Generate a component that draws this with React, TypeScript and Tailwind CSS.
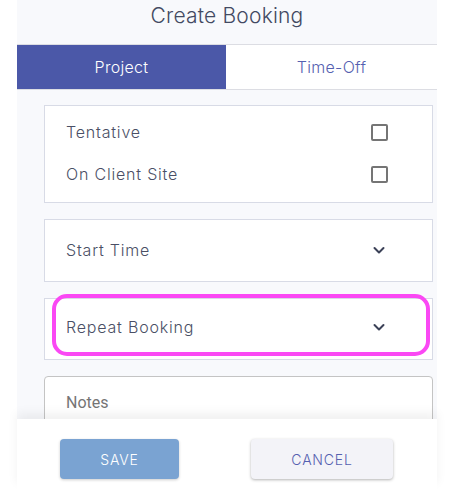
import React from "react";

function Chevron() {
  return (
    <svg width="14" height="14" viewBox="0 0 14 14" fill="none" stroke="#3b4157" strokeWidth="2" strokeLinecap="round" strokeLinejoin="round">
      <path d="M2.5 5L7 9.5L11.5 5" />
    </svg>
  );
}

function Box() {
  return <div className="w-[17px] h-[17px] border-2 border-[#757575] rounded-[2px] bg-white" />;
}

export default function App() {
  const font = { fontFamily: "Inter, 'Noto Sans', sans-serif" };
  return (
    <div className="w-[450px] h-[489px] bg-white flex overflow-hidden font-light" style={font}>
      <div className="w-[17px] shrink-0 bg-white" />
      <div className="w-[420px] shrink-0 h-full flex flex-col bg-[#f8f9fc] relative">
        <div className="h-[45px] shrink-0 flex items-start justify-center pt-[3px] border-b border-[#dcdde3]">
          <span className="text-[21px] text-[#434a62] leading-[26px] tracking-[0.2px]">Create Booking</span>
        </div>
        <div className="flex h-[45px] shrink-0 border-b border-[#dcdde3] tracking-[0.3px]">
          <div className="w-[209px] bg-[#4b58a8] text-white flex items-center justify-center text-[16px]">Project</div>
          <div className="flex-1 bg-white text-[#5560b0] flex items-center justify-center text-[16px]">Time-Off</div>
        </div>
        <div className="flex-1 overflow-hidden pl-[27px] pr-[4px] pt-[15px] flex flex-col gap-[16px] tracking-[0.8px]">
          <div className="bg-white border border-[#d8dbe6] h-[98px] shrink-0 flex flex-col justify-center gap-[17px] pl-[21px] pr-[44px] pb-[2px] text-[#4a4f65] text-[16px]">
            <div className="flex items-center justify-between h-[25px]">
              <span>Tentative</span>
              <Box />
            </div>
            <div className="flex items-center justify-between h-[25px]">
              <span>On Client Site</span>
              <Box />
            </div>
          </div>
          <div className="bg-white border border-[#d8dbe6] h-[63px] shrink-0 flex items-center justify-between pl-[21px] pr-[46px] pb-[2px] text-[#4a4f65] text-[16px]">
            <span>Start Time</span>
            <Chevron />
          </div>
          <div className="relative bg-white border border-[#d8dbe6] h-[62px] shrink-0 flex items-center justify-between pl-[21px] pr-[46px] pb-[4px] text-[#4a4f65] text-[16px]">
            <span>Repeat Booking</span>
            <Chevron />
            <div className="absolute left-[7px] right-[2px] top-[-5px] h-[62px] border-[4px] border-[#fa48f4] rounded-[15px] pointer-events-none" />
          </div>
          <div className="bg-white border border-[#c4c4c4] rounded-[4px] h-[80px] shrink-0 pl-[21px] pt-[13px] tracking-normal">
            <span className="text-[16px] text-[#757575] font-normal" style={{ fontFamily: "Roboto, sans-serif" }}>Notes</span>
          </div>
        </div>
        <div className="absolute left-0 right-0 bottom-0 h-[70px] bg-white shadow-[0_-6px_10px_rgba(0,0,0,0.06)] flex items-start pt-[20px] tracking-[0.8px]">
          <div className="ml-[43px] w-[119px] h-[40px] rounded-[4px] bg-[#7aa3d2] text-white text-[14px] flex items-center justify-center shadow-[0_1px_3px_rgba(0,0,0,0.2)]">SAVE</div>
          <div className="ml-[72px] w-[142px] h-[40px] rounded-[4px] bg-[#f3f3f8] text-[#5560b0] text-[14px] flex items-center justify-center shadow-[0_1px_3px_rgba(0,0,0,0.3)]">CANCEL</div>
        </div>
      </div>
      <div className="flex-1 bg-white" />
    </div>
  );
}
